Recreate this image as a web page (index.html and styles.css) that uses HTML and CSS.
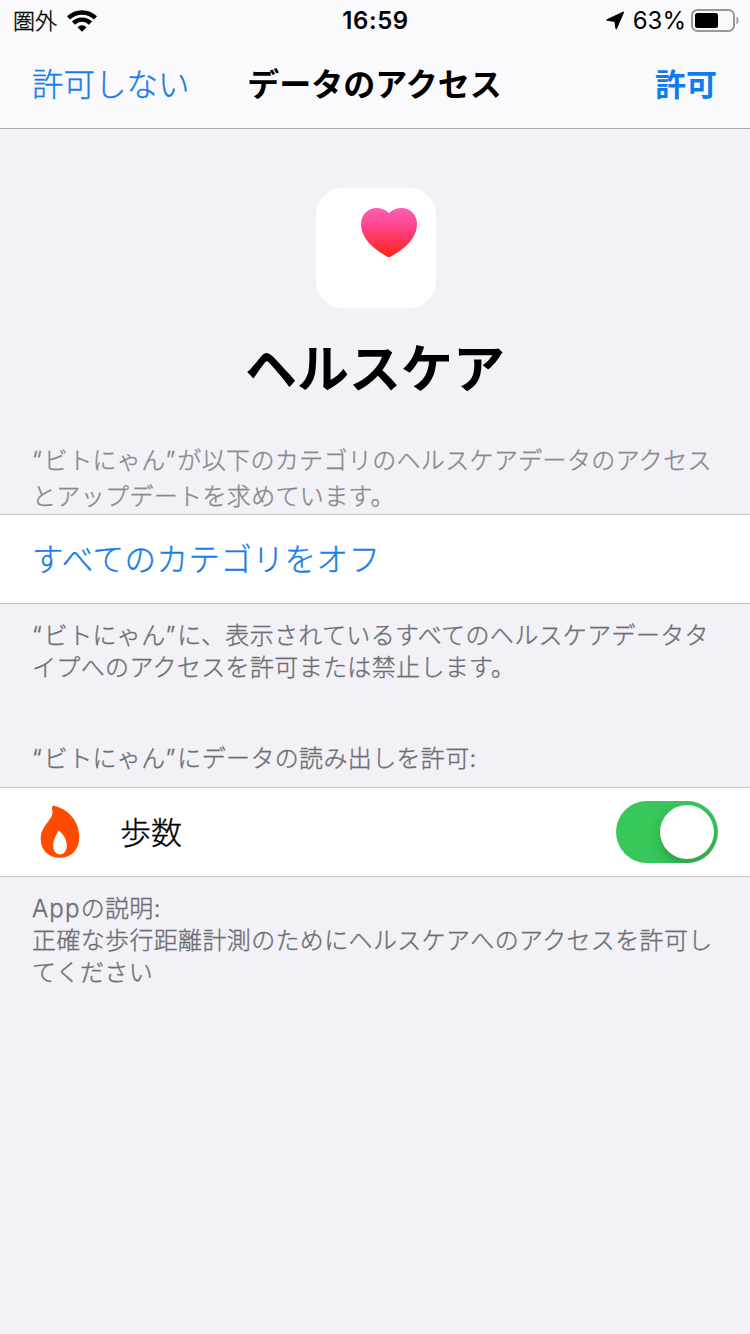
FILE: index.html
```html
<!DOCTYPE html>
<html lang="ja">
<head>
<meta charset="utf-8">
<title>データのアクセス</title>
<link rel="stylesheet" href="styles.css">
</head>
<body>
<header class="top">
  <div class="status">
    <div class="status-left">
      <span class="carrier">圏外</span>
      <svg class="wifi" width="30" height="22" viewBox="0 0 30 22">
        <path d="M1.500 7.900a19.500 19.500 0 0 1 27 0" fill="none" stroke="#000" stroke-width="4.400"/>
        <path d="M6.500 13.100a12.200 12.200 0 0 1 17 0" fill="none" stroke="#000" stroke-width="4.400"/>
        <path d="M10.500 17.200a6.400 6.400 0 0 1 9 0L15 21.700z"/>
      </svg>
    </div>
    <span class="clock">16:59</span>
    <div class="status-right">
      <svg class="location" width="19" height="19" viewBox="0 0 19 19"><path stroke="#000" stroke-width="1.600" stroke-linejoin="round" d="M17.200 1.400 1.200 9l8 1.200 1 7.300z"/></svg>
      <span class="percent">63%</span>
      <svg class="battery" width="48" height="23" viewBox="0 0 48 23">
        <rect x="1" y="1" width="42" height="21" rx="5.500" fill="none" stroke="#98989b" stroke-width="2"/>
        <rect x="4" y="4" width="23" height="15" rx="2.500"/>
        <path d="M45.500 7.500c2.600 1.200 2.600 6.800 0 8z" fill="#98989b"/>
      </svg>
    </div>
  </div>
  <nav class="nav">
    <span class="deny">許可しない</span>
    <span class="title">データのアクセス</span>
    <span class="allow">許可</span>
  </nav>
</header>
<main>
  <section class="hero">
    <div class="app-icon">
      <svg width="56" height="50" viewBox="0 0 56 50">
        <defs><linearGradient id="heart" x1="0" y1="0" x2="0" y2="1"><stop offset="0" stop-color="#fc5fb4"/><stop offset=".35" stop-color="#fd4690"/><stop offset="1" stop-color="#fe2417"/></linearGradient></defs>
        <path fill="url(#heart)" d="M28 5.300C24.500 1.500 20 0 15.500 0 6.500 0 0 7 0 16c0 14 12 25 26 32.400 1.500.8 2.500.8 4 0C44 41 56 30 56 16 56 7 49.500 0 40.500 0 36 0 31.500 1.500 28 5.300z"/>
      </svg>
    </div>
    <h1 class="name">ヘルスケア</h1>
    <p class="intro"><span class="quote">“</span>ビトにゃん<span class="quote">”</span>が以下のカテゴリのヘルスケアデータのアクセス<br>とアップデートを求めています。</p>
  </section>
  <div class="row"><span class="all-off">すべてのカテゴリをオフ</span></div>
  <p class="note access-note"><span class="quote">“</span>ビトにゃん<span class="quote">”</span>に、表示されているすべてのヘルスケアデータタ<br>イプへのアクセスを許可または禁止します。</p>
  <p class="note read-label"><span class="quote">“</span>ビトにゃん<span class="quote">”</span>にデータの読み出しを許可:</p>
  <div class="row steps">
    <svg class="flame" width="40" height="54" viewBox="0 0 40 54">
      <path fill="#ff4a00" d="M14.500.9C27 3.500 39.300 15 39.300 32 39.300 44.500 31.500 52.800 20 52.800S.7 45 .7 34C.7 26 4.500 21.500 8.500 16 11.500 12 13.300 9 12.300 5 12 3.800 11.900 3.200 12.100 2.200 12.400 1.100 13.400.7 14.500.9z"/>
      <path fill="#fff" d="M18.400 25.400C22.500 28 26.800 33.500 26.800 40.500 26.800 45.800 24 49.400 20 49.400S13.200 45.800 13.200 40.500C13.200 34.500 16.300 30 18.400 25.400z"/>
    </svg>
    <span class="steps-label">歩数</span>
    <span class="toggle"><span class="knob"></span></span>
  </div>
  <p class="note app-note"><span class="latin">App</span>の説明:<br>正確な歩行距離計測のためにヘルスケアへのアクセスを許可し<br>てください</p>
</main>
</body>
</html>
```
FILE: styles.css
```css
* { box-sizing: border-box; }
body {
  margin: 0;
  width: 750px;
  height: 1334px;
  overflow: hidden;
  background: #f2f1f7;
  color: #000;
  font-family: Inter, "Noto Sans CJK JP", sans-serif;
  font-weight: 300;
  -webkit-text-stroke: .35px currentColor;
  white-space: nowrap;
}
h1, p { margin: 0; }
svg { display: block; flex: none; }
.top {
  height: 129px;
  background: #fafafc;
  border-bottom: 1px solid #a9a8ae;
}
.status {
  display: grid;
  grid-template-columns: 1fr auto 1fr;
  height: 40px;
  padding: 0 11px 0 13px;
  align-items: center;
}
.status-left, .status-right { display: flex; align-items: center; }
.status-right { justify-content: flex-end; }
.carrier { font-size: 22px; line-height: 40px; padding-top: 1px; }
.wifi { margin-left: 10px; }
.clock, .percent {
  padding-top: 1px;
  font-size: 24px;
  line-height: 40px;
  -webkit-text-stroke: 0;
}
.clock { padding-right: 1px; font-weight: 600; letter-spacing: .6px; }
.percent { margin: 0 5px 0 8px; font-weight: 400; }
.nav {
  display: grid;
  grid-template-columns: 1fr auto 1fr;
  height: 88px;
  padding: 1px 33px 0 32px;
  line-height: 88px;
  font-size: 31.500px;
}
.deny { color: #187ce8; }
.title { font-size: 32px; font-weight: 700; -webkit-text-stroke: 0; }
.allow {
  color: #107bf0;
  font-weight: 700;
  font-size: 31px;
  text-align: right;
  -webkit-text-stroke: 0;
}
.hero {
  display: flex;
  flex-direction: column;
  align-items: center;
  height: 385px;
  padding-top: 59px;
}
.app-icon {
  flex: none;
  width: 120px;
  height: 120px;
  margin-left: 2px;
  padding: 20px 0 0 45px;
  border-radius: 27px;
  background: #fff;
}
.name {
  margin-top: 22px;
  font-size: 52px;
  font-weight: 700;
  line-height: 80px;
  -webkit-text-stroke: 0;
}
.intro {
  align-self: stretch;
  margin-top: 33px;
  padding-left: 32px;
  font-size: 24px;
  line-height: 36px;
  letter-spacing: .35px;
  color: #88878d;
}
.quote { letter-spacing: 2px; }
.row {
  display: flex;
  align-items: center;
  height: 90px;
  padding: 0 32px 0 33px;
  border: solid #c6c5ca;
  border-width: 1px 0;
  background: #fff;
  font-size: 31px;
}
.all-off {
  margin-left: -1px;
  padding-bottom: 5px;
  color: #187ce8;
  font-size: 31.500px;
  letter-spacing: .5px;
}
.note {
  padding-left: 32px;
  font-size: 24px;
  line-height: 32px;
  letter-spacing: .35px;
  color: #6d6d73;
}
.access-note { padding-top: 16px; }
.read-label { padding-top: 59px; height: 103px; }
.flame { margin-left: 7px; }
.steps-label { margin-left: 40px; padding-bottom: 3px; }
.toggle {
  display: flex;
  width: 102px;
  height: 62px;
  margin-left: auto;
  padding: 4px;
  justify-content: flex-end;
  border-radius: 31px;
  background: #37c75a;
  overflow: hidden;
}
.knob {
  width: 54px;
  height: 54px;
  border-radius: 50%;
  background: #fff;
  box-shadow: 0 6px 16px rgba(0, 0, 0, .15), 0 6px 2px rgba(0, 0, 0, .06);
}
.app-note { padding-top: 16px; }
.latin { letter-spacing: 1.200px; }
```
